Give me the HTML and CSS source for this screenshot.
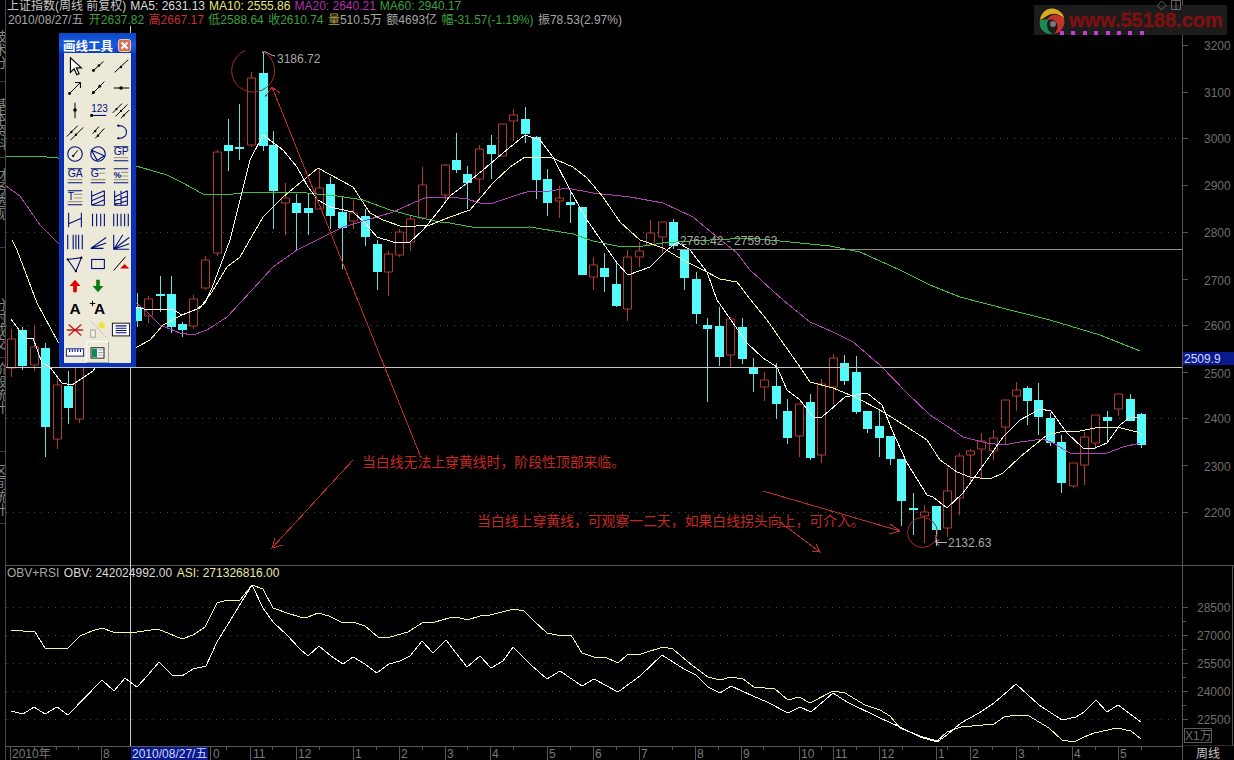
FILE: index.html
```html
<!DOCTYPE html>
<html lang="zh">
<head>
<meta charset="utf-8">
<title>上证指数 周线</title>
<link rel="stylesheet" href="styles.css">
</head>
<body>
<div class="app">
  <nav class="tabs">
    <div class="tab t1">技术分析</div>
    <div class="tab t2">基本资料</div>
    <div class="tab t3">财务透视</div>
    <div class="tab t4">分时成交</div>
    <div class="tab t5">阶段统计</div>
    <div class="tab t6">区间统计</div>
  </nav>

  <main class="main">
    <svg class="chart" viewBox="6 0 1176 565" width="1176" height="565">
      <path class="grid" d="M6 138.5H1182M6 232.5H1182M6 325.5H1182M6 418.5H1182M6 512.5H1182"/>
      <path class="wick-r" d="M11.5 329V377M34.5 326V371M57.5 378V449M79.5 350V423M148.5 296V323M193.5 295V329M205.5 256V290M217.5 150V256M251.5 72V147M285.5 183V235M319.5 168V209M353.5 200V229M388.5 251V296M399.5 229V257M410.5 216V251M422.5 167V220M445.5 164V203M479.5 145V193M502.5 124V156M513.5 109V141M559.5 186V218M593.5 257V290M627.5 250V321M639.5 242V267M650.5 220V245M662.5 222V253M730.5 317V368M764.5 372V401M799.5 404V457M821.5 379V463M833.5 354V404M924.5 505V543M947.5 468V537M959.5 453V515M970.5 449V483M981.5 433V478M993.5 430V460M1005.5 400V445M1016.5 382V411M1073.5 463V488M1084.5 432V485M1095.5 415V449M1118.5 394V416"/>
      <path class="body-r" d="M7.5 339h8v29h-8zM30.5 347h8v18h-8zM53.5 385h8v54h-8zM75.5 350h8v69h-8zM144.5 299h8v17h-8zM189.5 299h8v27h-8zM201.5 260h8v28h-8zM213.5 152h8v101h-8zM247.5 78h8v67h-8zM281.5 198h8v5h-8zM315.5 188h8v21h-8zM349.5 213h8v8h-8zM384.5 254h8v18h-8zM395.5 232h8v23h-8zM406.5 219h8v23h-8zM418.5 185h8v33h-8zM441.5 165h8v30h-8zM475.5 149h8v30h-8zM498.5 124h8v32h-8zM509.5 115h8v6h-8zM555.5 198h8v3h-8zM589.5 265h8v12h-8zM623.5 257h8v52h-8zM635.5 251h8v6h-8zM646.5 233h8v12h-8zM658.5 222h8v15h-8zM726.5 319h8v36h-8zM760.5 380h8v7h-8zM795.5 404h8v32h-8zM817.5 384h8v71h-8zM829.5 358h8v29h-8zM920.5 512h8v4h-8zM943.5 491h8v37h-8zM955.5 456h8v42h-8zM966.5 451h8v4h-8zM977.5 441h8v8h-8zM989.5 438h8v13h-8zM1001.5 400h8v27h-8zM1012.5 390h8v6h-8zM1069.5 463h8v23h-8zM1080.5 437h8v28h-8zM1091.5 415h8v28h-8zM1114.5 394h8v15h-8z"/>
      <path class="wick-c" d="M22.5 327V370M45.5 343V457M68.5 371V424M137.5 293V327M160.5 276V312M171.5 276V333M182.5 322V337M228.5 119V171M239.5 104V160M263.5 52V151M273.5 131V229M296.5 194V251M308.5 193V235M330.5 177V229M342.5 197V269M365.5 209V246M377.5 240V290M456.5 133V173M467.5 166V209M491.5 135V179M525.5 107V143M536.5 136V199M547.5 169V216M570.5 192V223M604.5 253V292M616.5 263V307M673.5 219V249M684.5 250V290M696.5 272V324M707.5 318V402M719.5 307V366M742.5 318V364M753.5 358V392M776.5 363V419M787.5 399V444M810.5 394V460M844.5 355V385M856.5 356V414M867.5 411V433M879.5 409V457M890.5 436V465M901.5 459V526M913.5 493V535M936.5 506V546M1027.5 386V425M1038.5 383V435M1050.5 413V446M1061.5 435V493M1107.5 411V443M1130.5 394V421M1141.5 413V448"/>
      <path class="body-c" d="M18 330h9v36h-9zM41 348h9v79h-9zM64 386h9v22h-9zM133 307h9v14h-9zM156 294h9v2h-9zM167 294h9v33h-9zM178 324h9v6h-9zM224 145h9v6h-9zM235 147h9v2h-9zM259 73h9v73h-9zM269 145h9v46h-9zM292 203h9v10h-9zM304 208h9v5h-9zM326 184h9v32h-9zM338 212h9v16h-9zM361 216h9v21h-9zM373 244h9v28h-9zM452 160h9v10h-9zM463 174h9v9h-9zM487 145h9v9h-9zM521 119h9v15h-9zM532 137h9v43h-9zM543 179h9v24h-9zM566 202h9v3h-9zM578 207h9v68h-9zM600 268h9v9h-9zM612 284h9v22h-9zM669 222h9v24h-9zM680 250h9v28h-9zM692 279h9v35h-9zM703 325h9v4h-9zM715 326h9v31h-9zM738 327h9v32h-9zM749 368h9v6h-9zM772 386h9v18h-9zM783 411h9v27h-9zM806 402h9v56h-9zM840 363h9v18h-9zM852 372h9v40h-9zM863 411h9v18h-9zM875 426h9v12h-9zM886 436h9v23h-9zM897 459h9v42h-9zM909 508h9v2h-9zM932 506h9v24h-9zM1023 388h9v13h-9zM1034 400h9v17h-9zM1046 418h9v25h-9zM1057 442h9v41h-9zM1103 417h9v4h-9zM1126 399h9v22h-9zM1137 414h9v31h-9z"/>
      <polyline class="ma60" points="6,156 35,156 58,158 136,166 150,170 167,175 183,183 203,194 233,194 250,192 283,192 307,193 337,196 363,200 390,210 417,217 440,222 450,223 477,228 530,227 573,234 593,241 617,246 637,247 663,243 690,241 750,238 780,241 830,246 860,252 900,270 930,285 960,297 1010,310 1050,320 1100,335 1140,351"/>
      <polyline class="ma20" points="6,186 20,196 40,225 58,243 80,262 144,309 160,325 180,333 193,335 207,330 227,317 252,290 273,267 297,250 323,237 343,227 367,220 393,212 413,203 427,197 450,197 467,199 480,203 493,203 517,195 530,191 550,191 567,188 593,193 630,197 663,203 693,217 717,237 737,253 750,270 783,300 810,322 833,332 853,342 880,365 907,393 930,415 953,430 963,437 987,443 1003,445 1020,442 1043,439 1053,443 1070,453 1087,454 1107,453 1123,447 1140,443"/>
      <polyline class="ma10" points="12,240 17,250 37,303 58,342 90,360 137,347 150,340 163,325 182,315 200,308 212,292 227,267 240,257 263,217 283,197 318,168 353,187 370,213 383,220 403,227 430,225 450,217 470,210 493,183 510,167 525,157 550,157 573,167 587,178 603,197 620,222 640,240 663,248 683,260 703,270 720,279 737,282 750,299 767,320 783,343 800,367 810,382 833,388 857,398 880,410 907,427 927,440 940,460 957,472 970,477 990,479 1003,473 1020,457 1047,435 1060,432 1080,431 1100,427 1117,427 1137,432 1142,435"/>
      <polyline class="ma5" points="11,319 25,338 33,338 42,363 50,367 62,383 72,385 93,371 137,307 144,309 157,310 172,309 182,315 197,309 205,303 212,288 230,240 250,160 263,135 283,150 297,167 308,187 318,200 330,207 353,212 365,223 377,237 393,242 410,242 423,230 437,213 450,196 467,183 483,170 503,153 525,135 540,140 553,157 570,190 587,220 603,243 617,263 628,275 650,267 667,250 677,242 690,250 707,272 717,300 733,323 747,343 763,358 777,367 787,390 800,400 813,417 822,417 845,397 867,393 882,405 892,430 907,463 927,495 933,497 947,508 963,493 987,460 1003,437 1020,420 1040,409 1051,411 1067,433 1083,448 1095,448 1107,443 1120,425 1130,417 1140,418"/>
      <path class="cross" d="M6 367.5H1182M130.5 26V565"/>
      <path class="level" d="M677 249.5H1182"/>
      <path class="conn" d="M262 53C265 49 268 55 275 56M936 542.5H947M936 542.5l3-3M936 542.5l3 3M936 535V543"/>
      <text class="note" x="277" y="63">3186.72</text>
      <text class="note" x="680" y="245">2763.42 - 2759.63</text>
      <text class="note" x="948" y="547">2132.63</text>
      <path class="mark" d="M262 51A21.5 21.5 0 1 1 245 50.7"/>
      <circle class="mark" cx="922.5" cy="532.5" r="15"/>
      <path class="arrow" d="M420 455L272 87M265 97L272 87L280 93M353 460L272 548M275 538L272 548L283 545M763 491L900 531M890 524L900 531L889 534M780 522L820 552M812 551L820 552L816 544"/>
      <text class="anno" x="362" y="467">当白线无法上穿黄线时，阶段性顶部来临。</text>
      <text class="anno" x="477" y="526">当白线上穿黄线，可观察一二天，如果白线拐头向上，可介入。</text>
    </svg>

    <header class="quote">
      <div class="quote-line">
        <span class="q-title">上证指数(周线 前复权)</span>
        <span class="q-white">MA5: 2631.13</span>
        <span class="q-yellow">MA10: 2555.86</span>
        <span class="q-magenta">MA20: 2640.21</span>
        <span class="q-green">MA60: 2940.17</span>
      </div>
      <div class="quote-line quote-data">
        <span class="q-gray">2010/08/27/五</span>
        <span class="q-green q-open">开2637.82</span>
        <span class="q-red">高2667.17</span>
        <span class="q-green">低2588.64</span>
        <span class="q-green">收2610.74</span>
        <span class="q-gray"><span class="q-khaki">量</span>510.5万</span>
        <span class="q-gray">额4693亿</span>
        <span class="q-green">幅-31.57(-1.19%)</span>
        <span class="q-gray">振78.53(2.97%)</span>
      </div>
    </header>

    <aside class="toolbar">
      <div class="tb-title">
        <span class="tb-name">画线工具</span>
        <svg class="tb-close" viewBox="0 0 13 13" width="13" height="13"><rect x="0.5" y="0.5" width="12" height="12" rx="2" fill="#d8714f" stroke="#f2c8b8"/><path d="M3.5 3.5L9.5 9.5M9.5 3.5L3.5 9.5" stroke="#fff" stroke-width="2"/></svg>
      </div>
      <div class="tb-grid">
        <svg viewBox="0 0 22 22"><path d="M6 2V18L10 14L13 20.500L15.500 19.500L12.500 13H18Z" fill="#fff" stroke="#000" stroke-width="1.300"/></svg>
        <svg viewBox="0 0 22 22"><path class="i" d="M6 16L17 6"/><circle class="d" cx="6" cy="16" r="1.6"/><circle class="d" cx="12" cy="10.5" r="1.4"/></svg>
        <svg viewBox="0 0 22 22"><path class="i" d="M4 18L19 4"/><circle class="d" cx="11" cy="12" r="1.4"/></svg>

        <svg viewBox="0 0 22 22"><path class="i" d="M5 17L17 5M11 5H17V11"/><circle class="d" cx="5" cy="17" r="1.6"/></svg>
        <svg viewBox="0 0 22 22"><path class="i" d="M4 18L18 4"/><circle class="d" cx="6" cy="16" r="1.6"/><circle class="d" cx="13" cy="9" r="1.6"/></svg>
        <svg viewBox="0 0 22 22"><path class="i" d="M3 11H20"/><circle class="d" cx="11" cy="11" r="2"/></svg>

        <svg viewBox="0 0 22 22"><path class="i" d="M11 3V20"/><circle class="d" cx="11" cy="11" r="2"/></svg>
        <svg viewBox="0 0 22 22"><text class="tb-t tb-n" x="3.500" y="13">123</text><path class="n" d="M4 17H20"/><rect x="2.500" y="15.500" width="3" height="3" fill="#000"/></svg>
        <svg viewBox="0 0 22 22"><path class="i" d="M2 14L12 4M5 18L18 5M11 20L20 11"/><circle class="d" cx="6" cy="10" r="1.2"/><circle class="d" cx="11" cy="12" r="1.2"/><circle class="d" cx="14" cy="17" r="1.2"/></svg>

        <svg viewBox="0 0 22 22"><path class="i" d="M2 16L14 4M6 20L20 6"/><circle class="d" cx="7" cy="11" r="1.3"/><circle class="d" cx="12" cy="14" r="1.3"/></svg>
        <svg viewBox="0 0 22 22"><path class="i" d="M5 13L12 5M8 18L18 7"/><circle class="d" cx="8" cy="10" r="1.3"/><circle class="d" cx="11" cy="15" r="1.3"/></svg>
        <svg viewBox="0 0 22 22"><path class="n" d="M8 4C15 4 17 8 17 11C17 15 14 18 8 18"/><circle class="d" cx="8" cy="4" r="1.2"/><circle class="d" cx="8" cy="18" r="1.2"/></svg>

        <svg viewBox="0 0 22 22"><circle class="n" cx="11" cy="11" r="8"/><path class="i" d="M9 13L14 7"/><circle class="d" cx="9" cy="13" r="1.3"/></svg>
        <svg viewBox="0 0 22 22"><circle class="n" cx="11" cy="11" r="8"/><path class="n" d="M4 7L18 13L10 18Z"/></svg>
        <svg viewBox="0 0 22 22"><path class="n" d="M3 3H19M3 18.500H19"/><path class="g" d="M3 15H19"/><text class="tb-t" x="3" y="12.500">GP</text></svg>

        <svg viewBox="0 0 22 22"><path class="n" d="M3 3H19M3 18.500H19"/><path class="g" d="M3 15H19"/><text class="tb-t" x="3" y="12.500">GA</text></svg>
        <svg viewBox="0 0 22 22"><path class="n" d="M3 3H19M3 18.500H19"/><path class="g" d="M12 8H19M3 15H19"/><text class="tb-t" x="3" y="12.500">G</text></svg>
        <svg viewBox="0 0 22 22"><path class="n" d="M3 3H19M3 18.500H19"/><path class="g" d="M11 7H19M11 11H19M3 15H19"/><text class="tb-s" x="3" y="13">%</text></svg>

        <svg viewBox="0 0 22 22"><path class="n" d="M3 3H19M3 18.500H19"/><path class="g" d="M10 7H19M10 11H19M3 15H19"/><text class="tb-t" x="3" y="13">T</text></svg>
        <svg viewBox="0 0 22 22"><path class="n" d="M4 3V19M18 3V19M4 19H18M4 9L18 3M4 14L18 8M4 19L18 13"/></svg>
        <svg viewBox="0 0 22 22"><path class="n" d="M4 3V19M4 19H18M11 3V19M18 3V19M4 10L18 3M4 14L18 9M4 18L18 14"/></svg>

        <svg viewBox="0 0 22 22"><path class="n" d="M4 3V19M18 3V19M4 15L18 9"/></svg>
        <svg viewBox="0 0 22 22"><path class="n" d="M5 4V18M9.500 4V18M14 4V18M18 4V18"/></svg>
        <svg viewBox="0 0 22 22"><path class="n" d="M3 4V18M7 4V18M11 4V18M15 4V18M19 4V18"/></svg>

        <svg viewBox="0 0 22 22"><path class="n" d="M3 3V19M9 3V19M12 3V19M15 3V19M19 3V19"/></svg>
        <svg viewBox="0 0 22 22"><path class="n" d="M3 18L20 6M3 18L20 12M3 18L17 18"/></svg>
        <svg viewBox="0 0 22 22"><path class="n" d="M3 3V19H20M3 19L20 6M3 19L13 3M3 19L20 13"/></svg>

        <svg viewBox="0 0 22 22"><path class="n" d="M3 6L18 4L12 19Z"/><circle class="d" cx="3" cy="6" r="1.2"/><circle class="d" cx="18" cy="4" r="1.2"/><circle class="d" cx="12" cy="19" r="1.2"/></svg>
        <svg viewBox="0 0 22 22"><rect class="n" x="4" y="6" width="14" height="10"/></svg>
        <svg viewBox="0 0 22 22"><path class="i" d="M3 18L16 3"/><path d="M10 16L15 11L20 16Z" fill="#e00000"/></svg>

        <svg viewBox="0 0 22 22"><path d="M11 4L17 11H13V18H9V11H5Z" fill="#e00000"/></svg>
        <svg viewBox="0 0 22 22"><path d="M11 18L17 11H13V4H9V11H5Z" fill="#0a7a12"/></svg>
        <span class="tb-empty"></span>

        <svg viewBox="0 0 22 22"><text class="tb-a" x="5" y="18">A</text></svg>
        <svg viewBox="0 0 22 22"><text class="tb-a" x="6.500" y="18">A</text><path class="i" d="M2 6H8M5 3V9"/></svg>
        <span class="tb-empty"></span>

        <svg viewBox="0 0 22 22"><path d="M4 5L18 17M18 5L4 17M2 11H20" fill="none" stroke="#c01818" stroke-width="1.400"/></svg>
        <svg viewBox="0 0 22 22"><path d="M4 2L21 20" stroke="#aaa" fill="none" stroke-dasharray="2 1"/><rect x="3" y="11" width="5" height="8" fill="#f4f2e6" stroke="#999"/><circle cx="15" cy="6" r="3.500" fill="#f4e23c"/></svg>
        <svg viewBox="0 0 22 22"><rect x="1.500" y="3.500" width="19" height="14" fill="#fff" stroke="#000"/><path class="n" d="M5 6.500H17M5 9H17M5 11.500H17M5 14H17"/></svg>

        <svg viewBox="0 0 22 22"><rect x="1.500" y="7.500" width="19" height="8" fill="#fff" stroke="#00107a"/><path class="n" d="M5 8V11M8 8V11M11 8V11M14 8V11M17 8V11"/></svg>
        <span class="tb-sel"><svg viewBox="0 0 22 22"><rect x="3.500" y="5.500" width="15" height="12" fill="#fff" stroke="#000"/><rect x="4.500" y="6.500" width="6" height="10" fill="#0e8a55"/><path d="M12 8H17M12 11H17M12 14H17" stroke="#888"/></svg></span>
      </div>
    </aside>

    <div class="logo">
      <svg class="swirl" viewBox="0 0 28 28" width="28" height="28">
        <path d="M2 13C3 5 10 0 17 2C23 4 26 8 26 12C22 7 15 5 9 9C6 11 4 12 2 13Z" fill="#d9a81c"/>
        <path d="M26 11C28 19 23 26 16 27C20 23 21 18 17 14C14 12 10 12 9 15C9 10 14 7 19 8C22 9 25 10 26 11Z" fill="#c4302a"/>
        <path d="M2 13C0 21 6 28 15 27C11 25 9 22 9 18C9 15 10 13 11 12C7 12 4 13 2 13Z" fill="#1a8a4c"/>
        <circle cx="15" cy="17" r="3" fill="#777"/>
      </svg>
      <span class="logo-text">www.55188.com</span>
      <span class="logo-dots"><i></i><i></i><i></i><i></i><i></i><i></i><i></i><i></i></span>
    </div>
  </main>

  <aside class="axis">
    <svg viewBox="1182 0 52 565" width="52" height="565">
      <path class="rule" d="M1182.500 0V565"/>
      <path class="tick" d="M1182 45.500h6M1182 92.500h6M1182 138.500h6M1182 185.500h6M1182 232.500h6M1182 279.500h6M1182 325.500h6M1182 372.500h6M1182 418.500h6M1182 465.500h6M1182 512.500h6"/>
      <text class="ax" x="1204" y="50">3200</text>
      <text class="ax" x="1204" y="97">3100</text>
      <text class="ax" x="1204" y="143">3000</text>
      <text class="ax" x="1204" y="190">2900</text>
      <text class="ax" x="1204" y="237">2800</text>
      <text class="ax" x="1204" y="285">2700</text>
      <text class="ax" x="1204" y="330">2600</text>
      <rect class="cur" x="1183" y="352" width="51" height="13"/>
      <text class="cur-t" x="1184" y="363">2509.9</text>
      <text class="ax" x="1204" y="378">2500</text>
      <text class="ax" x="1204" y="423">2400</text>
      <text class="ax" x="1204" y="471">2300</text>
      <text class="ax" x="1204" y="517">2200</text>
    </svg>
  </aside>

  <section class="sub">
    <svg viewBox="6 565 1176 181" width="1176" height="181">
      <path class="rule" d="M6 565.500H1182"/>
      <path class="grid" d="M6 607.500H1182M6 635.500H1182M6 663.500H1182M6 691.500H1182M6 719.500H1182"/>
      <path class="cross" d="M130.500 565V746"/>
      <polyline class="obv" points="11,630 23,631 35,632 45,648 57,649 68,648 80,636 92,631 102,628 113,632 137,632 158,629 182,639 193,635 205,627 217,603 227,600 240,600 252,585 263,589 273,608 287,613 300,617 308,617 318,613 329,616 343,623 353,622 365,626 378,637 390,637 408,632 422,623 435,622 449,618 457,617 467,620 480,616 490,615 514,609 524,611 533,620 547,633 557,635 571,635 582,653 594,657 605,657 618,663 627,655 641,654 663,647 673,649 688,662 708,677 720,680 731,677 743,679 754,687 775,689 788,700 799,697 810,703 833,691 845,693 865,705 880,710 890,716 900,728 920,736 937,741 947,732 961,727 994,724 1004,717 1016,715 1029,716 1049,728 1062,740 1074,742 1084,737 1094,733 1117,728 1131,731 1141,739"/>
      <polyline class="asi" points="11,711 23,714 34,707 45,714 57,707 68,715 102,680 114,691 125,678 137,687 148,675 159,662 172,675 182,676 193,669 206,666 217,642 252,585 263,608 273,622 287,635 300,649 308,656 319,646 331,656 343,664 353,657 365,664 377,673 389,664 400,661 410,656 422,641 433,653 446,640 456,653 467,667 480,656 491,668 503,661 513,647 531,665 547,679 560,671 582,686 594,679 618,692 640,676 662,655 684,669 696,675 708,687 720,693 731,686 753,696 767,702 788,713 800,707 811,712 833,693 847,702 880,718 900,727 920,737 937,742 947,735 961,723 979,713 994,703 1016,684 1039,705 1062,720 1076,717 1084,712 1096,700 1107,712 1118,705 1141,722"/>
    </svg>
    <div class="sub-head">
      <span class="q-gray">OBV+RSI</span>
      <span class="q-white">OBV: 242024992.00</span>
      <span class="q-pale">ASI: 271326816.00</span>
    </div>
  </section>

  <aside class="axis">
    <svg viewBox="1182 565 52 181" width="52" height="181">
      <path class="rule" d="M1182.500 565V746M1182 565.500H1234M1232.500 565V746M1182 746H1234"/>
      <path class="tick" d="M1183 607.500h5M1183 621.500h3M1183 635.500h5M1183 649.500h3M1183 663.500h5M1183 677.500h3M1183 691.500h5M1183 705.500h3M1183 719.500h5"/>
      <text class="ax" x="1197" y="612">28500</text>
      <text class="ax" x="1197" y="640">27000</text>
      <text class="ax" x="1197" y="668">25500</text>
      <text class="ax" x="1197" y="696">24000</text>
      <text class="ax" x="1197" y="724">22500</text>
      <rect class="box" x="1184.500" y="728.500" width="27" height="14"/>
      <text class="ax" x="1185" y="740">X1万</text>
    </svg>
  </aside>

  <footer class="time">
    <svg viewBox="6 746 1176 14" width="1176" height="14">
      <path class="rule" d="M6 746.500H1182"/>
      <path class="tick" d="M10.500 747V760M101.500 747V760M210.500 747V760M250.500 747V760M296.500 747V760M353.500 747V760M399.500 747V760M445.500 747V760M490.500 747V760M547.500 747V760M593.500 747V760M639.500 747V760M695.500 747V760M741.500 747V760M799.500 747V760M833.500 747V760M879.500 747V760M936.500 747V760M970.500 747V760M1016.500 747V760M1072.500 747V760M1118.500 747V760M34.500 747V750M56.500 747V750M78.500 747V750M226.500 747V750M272.500 747V750M319.500 747V750M376.500 747V750M422.500 747V750M467.500 747V750M513.500 747V750M570.500 747V750M616.500 747V750M672.500 747V750M718.500 747V750M763.500 747V750M821.500 747V750M856.500 747V750M902.500 747V750M947.500 747V750M992.500 747V750M1038.500 747V750M1095.500 747V750M1141.500 747V750"/>
      <text class="tm" x="12" y="758">2010年</text>
      <text class="tm" x="103" y="758">8</text>
      <rect class="cur" x="131" y="747" width="77" height="13"/>
      <text class="cur-t" x="132" y="758">2010/08/27/五</text>
      <text class="tm" x="213" y="758">0</text>
      <text class="tm" x="253" y="758">11</text>
      <text class="tm" x="298" y="758">12</text>
      <text class="tm" x="355" y="758">1</text>
      <text class="tm" x="401" y="758">2</text>
      <text class="tm" x="447" y="758">3</text>
      <text class="tm" x="492" y="758">4</text>
      <text class="tm" x="549" y="758">5</text>
      <text class="tm" x="595" y="758">6</text>
      <text class="tm" x="641" y="758">7</text>
      <text class="tm" x="697" y="758">8</text>
      <text class="tm" x="743" y="758">9</text>
      <text class="tm" x="801" y="758">10</text>
      <text class="tm" x="835" y="758">11</text>
      <text class="tm" x="881" y="758">12</text>
      <text class="tm" x="938" y="758">1</text>
      <text class="tm" x="972" y="758">2</text>
      <text class="tm" x="1018" y="758">3</text>
      <text class="tm" x="1074" y="758">4</text>
      <text class="tm" x="1120" y="758">5</text>
    </svg>
  </footer>

  <div class="period">周线</div>

  <svg class="win-icons" viewBox="0 0 26 12" width="26" height="12">
    <path d="M4.500 1L9 5.500L4.500 10L0.500 5.500ZM14.500 0.500H23.500V9.500H14.500ZM19 0V10"/>
  </svg>
</div>
</body>
</html>
```

FILE: styles.css
```css
* { box-sizing: border-box; }
html, body { margin: 0; height: 100%; background: #000; overflow: hidden; }
body { font-family: "Liberation Sans", "Noto Sans CJK SC", sans-serif; font-size: 12px; }

.app {
  position: relative;
  display: grid;
  grid-template-columns: 6px 1176px 52px;
  grid-template-rows: 565px 181px 14px;
  width: 1234px;
  height: 760px;
  background: #000;
}

.tabs {
  grid-row: 1 / 4;
  border-right: 1px solid #4a4a4a;
  overflow: hidden;
  display: flex;
  flex-direction: column;
}
.tab {
  writing-mode: vertical-rl;
  font-size: 13px;
  line-height: 13px;
  color: #8a8a8a;
  margin-left: -8px;
  width: 14px;
  overflow: hidden;
  border-bottom: 1px solid #3a3a3a;
  flex: none;
}
.t1 { margin-top: 30px; height: 52px; }
.t2 { margin-top: 16px; height: 60px; }
.t3 { margin-top: 10px; height: 80px; }
.t4 { margin-top: 50px; height: 60px; }
.t5 { margin-top: 4px; height: 90px; }
.t6 { margin-top: 12px; height: 60px; }

svg { display: block; }

.main, .sub { position: relative; }
.chart { display: block; }

.grid { stroke: #4c4c4c; stroke-dasharray: 1 6; fill: none; }
.rule { stroke: #555; fill: none; }
.tick { stroke: #555; fill: none; }
.cross { stroke: #c8c8c8; fill: none; }
.level { stroke: #8c8c8c; fill: none; }
.conn { stroke: #bbb; fill: none; }
.wick-r { stroke: #b23a30; fill: none; }
.body-r { stroke: #b23a30; fill: #000; }
.wick-c { stroke: #74dada; fill: none; }
.body-c { fill: #55fbfb; }
polyline { fill: none; shape-rendering: crispEdges; }
.ma5, .asi { stroke: #ffffff; }
.ma10, .obv { stroke: #f6f6a8; }
.ma20 { stroke: #b040b4; }
.ma60 { stroke: #40c040; }
.mark { stroke: #a82a24; fill: none; }
.arrow { stroke: #c02c24; fill: none; shape-rendering: crispEdges; }

text { font-family: "Liberation Sans", "Noto Sans CJK SC", sans-serif; }
.note { font-size: 12px; fill: #a8a8a8; }
.anno { font-family: "Noto Sans CJK SC", sans-serif; font-size: 13.85px; fill: #c82820; }
.ax { font-size: 12px; fill: #6e6e6e; }
.tm { font-size: 12px; fill: #7a7a7a; }
.cur { fill: #0a1a8c; }
.cur-t { font-size: 12px; fill: #d0d8ff; }
.box { stroke: #5a5a5a; fill: none; }

.quote {
  position: absolute;
  left: 1px;
  top: -1px;
  color: #c0c0c0;
}
.quote-line { display: flex; gap: 4px; height: 14px; line-height: 14px; white-space: nowrap; }
.quote-data { gap: 4.4px; padding-left: 1px; }
.q-open { margin-left: 1px; }
.q-title { color: #c8c8c8; }
.q-white { color: #dcdcdc; }
.q-yellow { color: #e8e87c; }
.q-magenta { color: #b030b0; }
.q-green { color: #3ca03c; }
.q-red { color: #c83030; }
.q-gray { color: #a8a8a8; }
.q-khaki { color: #b8a040; }
.q-pale { color: #e8e8a0; }

.toolbar {
  position: absolute;
  left: 53px;
  top: 33px;
  width: 77px;
  height: 334px;
  background: #ece9d8;
  border: 4px solid #0a33c0;
  border-top: 0;
  box-shadow: inset 1px 0 0 #0a2a9c, inset -1px 0 0 #0a2a9c;
  display: flex;
  flex-direction: column;
}
.tb-title {
  height: 20px;
  margin: 0 -4px;
  padding: 5px 4px 0 4px;
  background: linear-gradient(#0a49c6, #1a5ce0 60%, #0a3fb8);
  display: flex;
  align-items: center;
  justify-content: space-between;
  flex: none;
}
.tb-name { color: #fff; font: bold 12.5px/14px "Noto Sans CJK SC", sans-serif; }
.tb-close { flex: none; margin-right: 1px; }

.tb-grid {
  display: grid;
  grid-template-columns: repeat(3, 23px);
  grid-auto-rows: 22px;
  justify-items: center;
  align-items: center;
  padding-top: 2px;
}
.tb-grid svg { width: 20px; height: 20px; }
.tb-sel { width: 23px; height: 22px; border: 1px solid #fff; border-right-color: #a8a69a; border-bottom-color: #a8a69a; display: flex; align-items: center; justify-content: center; }
.tb-sel svg { width: 19px; height: 19px; }
.i { stroke: #000; fill: none; stroke-width: 1.100; }
.n { stroke: #00107a; fill: none; stroke-width: 1.200; }
.g { stroke: #a09c88; fill: none; stroke-width: 1.200; }
.d { fill: #000; }
.tb-t { font-size: 11.500px; fill: #00107a; }
.tb-n { font-size: 11px; }
.tb-s { font-size: 9px; fill: #00107a; font-weight: 700; }
.tb-a { font-size: 17px; font-weight: 700; fill: #000; }

.logo {
  position: absolute;
  left: 1028px;
  top: 5px;
  width: 193px;
  height: 30px;
  background: #1c1c1c;
  display: flex;
  align-items: center;
  padding-left: 4px;
}
.swirl { flex: none; margin-top: 2px; }
.logo-text {
  margin-left: 3px;
  color: #7e1010;
  font: bold 20px/20px "Liberation Sans", sans-serif;
  -webkit-text-stroke: 0.4px #7e1010;
}
.logo-dots {
  position: absolute;
  left: 26px;
  bottom: 0;
  display: flex;
  gap: 7.400px;
}
.logo-dots i { width: 4px; height: 4px; background: #c23ed0; display: block; }

.win-icons {
  position: absolute;
  left: 1157px;
  top: 0;
  fill: none;
  stroke: #666;
}

.axis { background: #000; }
.sub-head {
  position: absolute;
  left: 1px;
  top: 1px;
  display: flex;
  gap: 4.500px;
  line-height: 14px;
  white-space: nowrap;
}
.time { grid-column: 2; }
.period { color: #c4c4c4; font-size: 12px; line-height: 14px; padding-left: 13px; border-left: 1px solid #555; white-space: nowrap; font-family: "Noto Sans CJK SC", sans-serif; }
```
